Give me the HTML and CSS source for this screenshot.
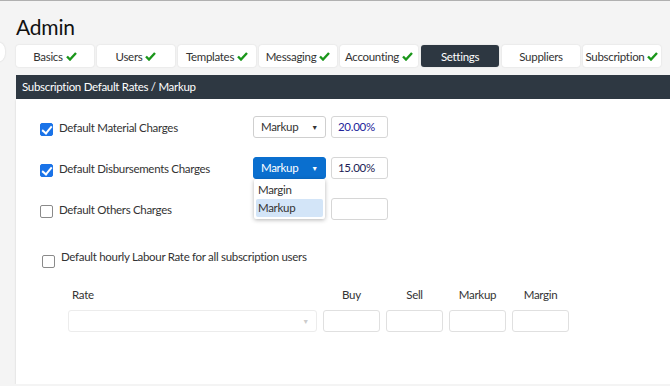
FILE: index.html
```html
<!DOCTYPE html>
<html lang="en">
<head>
  <meta charset="UTF-8" />
  <title>Admin - Settings</title>
  <link rel="stylesheet" href="styles.css">
</head>
<body>
  <div class="side-handle"></div>

  <div class="page">
    <h1>Admin</h1>

    <div class="tabs">
      <div class="tab">Basics <svg class="tick" viewBox="0 0 11 9"><path d="M1 4.5 L4 7.5 L10 1"/></svg></div>
      <div class="tab">Users <svg class="tick" viewBox="0 0 11 9"><path d="M1 4.5 L4 7.5 L10 1"/></svg></div>
      <div class="tab">Templates <svg class="tick" viewBox="0 0 11 9"><path d="M1 4.5 L4 7.5 L10 1"/></svg></div>
      <div class="tab">Messaging <svg class="tick" viewBox="0 0 11 9"><path d="M1 4.5 L4 7.5 L10 1"/></svg></div>
      <div class="tab">Accounting <svg class="tick" viewBox="0 0 11 9"><path d="M1 4.5 L4 7.5 L10 1"/></svg></div>
      <div class="tab active">Settings</div>
      <div class="tab">Suppliers</div>
      <div class="tab">Subscription <svg class="tick" viewBox="0 0 11 9"><path d="M1 4.5 L4 7.5 L10 1"/></svg></div>
    </div>

    <div class="section-head">Subscription Default Rates / Markup</div>

    <div class="panel">
      <div class="charge-row">
        <span class="check checked"></span>
        <span class="charge-label">Default Material Charges</span>
        <div class="select">Markup <span class="caret">&#9660;</span></div>
        <div class="field value">20.00%</div>
      </div>

      <div class="charge-row">
        <span class="check checked"></span>
        <span class="charge-label">Default Disbursements Charges</span>
        <div class="select open">
          Markup <span class="caret">&#9660;</span>
          <div class="menu">
            <div class="option">Margin</div>
            <div class="option selected">Markup</div>
          </div>
        </div>
        <div class="field value dark">15.00%</div>
      </div>

      <div class="charge-row">
        <span class="check"></span>
        <span class="charge-label">Default Others Charges</span>
        <div class="select blank"></div>
        <div class="field"></div>
      </div>

      <div class="labour-row">
        <span class="check"></span>
        <span class="charge-label wide">Default hourly Labour Rate for all subscription users</span>
      </div>

      <div class="rate-table">
        <div class="rate-col">
          <div class="col-head left">Rate</div>
          <div class="select disabled"><span class="caret">&#9660;</span></div>
        </div>
        <div class="num-col">
          <div class="col-head">Buy</div>
          <div class="field"></div>
        </div>
        <div class="num-col">
          <div class="col-head">Sell</div>
          <div class="field"></div>
        </div>
        <div class="num-col">
          <div class="col-head">Markup</div>
          <div class="field"></div>
        </div>
        <div class="num-col">
          <div class="col-head">Margin</div>
          <div class="field"></div>
        </div>
      </div>
    </div>
  </div>
</body>
</html>
```

FILE: styles.css
```css
body {
  margin: 0;
  background: #f4f4f4;
  border-top: 1px solid #b0b0b0;
  font-family: Lato, "Open Sans", sans-serif;
  letter-spacing: -0.3px;
  color: #333;
  overflow: hidden;
}

.side-handle {
  position: absolute;
  left: -15px;
  top: 42px;
  width: 20px;
  height: 20px;
  background: white;
  border-radius: 8px;
  box-shadow: 0 0 2px rgba(0, 0, 0, 0.15);
}

.page {
  padding-left: 16px;
}

h1 {
  margin: 13px 0 0;
  font-size: 21px;
  line-height: 26px;
  font-weight: normal;
  letter-spacing: -0.2px;
  color: #111;
}

.tabs {
  display: flex;
  gap: 3px;
  margin-top: 5px;
}

.tab {
  width: 78px;
  height: 22px;
  display: flex;
  align-items: center;
  justify-content: center;
  gap: 3px;
  flex-shrink: 0;
  background: white;
  border-radius: 3px;
  box-shadow: 0 0 2px rgba(0, 0, 0, 0.12);
  font-size: 11.5px;
  color: #333;
  white-space: nowrap;
}

.tab.active {
  background: #2d3741;
  color: white;
}

.tick {
  width: 11px;
  height: 9px;
  fill: none;
  stroke: #1a961a;
  stroke-width: 2.4;
}

.section-head {
  margin-top: 8px;
  height: 24px;
  line-height: 24px;
  background: #2e3842;
  color: white;
  font-size: 11.5px;
  padding-left: 6px;
}

.panel {
  background: white;
  height: 268px;
  padding: 17px 0 0 24px;
  box-shadow: 0 1px 2px rgba(0, 0, 0, 0.15);
}

.charge-row {
  display: flex;
  align-items: center;
  height: 22px;
  margin-bottom: 19px;
}

.check {
  width: 13px;
  height: 13px;
  box-sizing: border-box;
  border: 1px solid #8a8a8a;
  border-radius: 2px;
  margin-top: 5px;
  margin-right: 6px;
  flex-shrink: 0;
  position: relative;
}

.check.checked {
  background: #1a73e8;
  border-color: #1a73e8;
}

.check.checked::after {
  content: "";
  position: absolute;
  left: 3px;
  top: 0px;
  width: 4px;
  height: 8px;
  border: solid white;
  border-width: 0 2px 2px 0;
  transform: rotate(40deg);
}

.charge-label {
  width: 194px;
  font-size: 11.5px;
  color: #333;
  flex-shrink: 0;
}

.charge-label.wide {
  width: auto;
  margin-top: -5px;
}

.select {
  position: relative;
  width: 73px;
  height: 22px;
  line-height: 20px;
  box-sizing: border-box;
  border: 1px solid #cfcfcf;
  border-radius: 3px;
  padding-left: 7px;
  font-size: 11.5px;
  color: #333;
  flex-shrink: 0;
}

.select.blank {
  visibility: hidden;
}

.select.open {
  background: #0a6fcf;
  border-color: #0a6fcf;
  color: white;
}

.caret {
  position: absolute;
  right: 7px;
  top: 0;
  font-size: 7px;
}

.menu {
  position: absolute;
  left: 0;
  top: 21px;
  width: 71px;
  padding: 2px;
  box-sizing: border-box;
  background: white;
  box-shadow: 0 1px 4px rgba(0, 0, 0, 0.3);
  border-radius: 2px;
  z-index: 5;
}

.option {
  height: 18px;
  line-height: 18px;
  padding-left: 2px;
  color: #333;
  border-radius: 2px;
}

.option.selected {
  background: #d3e5f8;
}

.field {
  width: 57px;
  height: 22px;
  line-height: 20px;
  box-sizing: border-box;
  border: 1px solid #d6d6d6;
  border-radius: 3px;
  padding-left: 6px;
  font-size: 11.5px;
  margin-left: 5px;
  flex-shrink: 0;
}

.field.value {
  color: #23239a;
}

.field.value.dark {
  color: #1c1c55;
}

.labour-row {
  display: flex;
  align-items: center;
  margin-top: 30px;
  padding-left: 2px;
}

.rate-table {
  display: flex;
  gap: 6px;
  margin-top: 20px;
  padding-left: 28px;
}

.rate-col .select {
  width: 249px;
  border-color: #ececec;
}

.rate-col .caret {
  color: #ccc;
}

.rate-table .field {
  margin-left: 0;
  border-color: #e0e0e0;
}

.col-head {
  font-size: 11.5px;
  text-align: center;
  height: 16px;
  margin-bottom: 6px;
}

.col-head.left {
  text-align: left;
  padding-left: 4px;
}

.num-col {
  width: 57px;
}
```
